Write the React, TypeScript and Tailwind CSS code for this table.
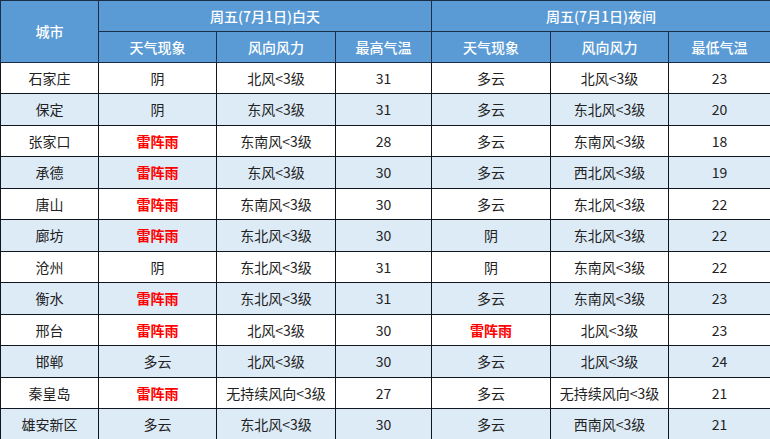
const rows: [string, string, string, string, string, string, string][] = [
  ["石家庄", "阴", "北风<3级", "31", "多云", "北风<3级", "23"],
  ["保定", "阴", "东风<3级", "31", "多云", "东北风<3级", "20"],
  ["张家口", "雷阵雨", "东南风<3级", "28", "多云", "东南风<3级", "18"],
  ["承德", "雷阵雨", "东风<3级", "30", "多云", "西北风<3级", "19"],
  ["唐山", "雷阵雨", "东南风<3级", "30", "多云", "东北风<3级", "22"],
  ["廊坊", "雷阵雨", "东北风<3级", "30", "阴", "东北风<3级", "22"],
  ["沧州", "阴", "东北风<3级", "31", "阴", "东南风<3级", "22"],
  ["衡水", "雷阵雨", "东北风<3级", "31", "多云", "东南风<3级", "23"],
  ["邢台", "雷阵雨", "北风<3级", "30", "雷阵雨", "北风<3级", "23"],
  ["邯郸", "多云", "北风<3级", "30", "多云", "北风<3级", "24"],
  ["秦皇岛", "雷阵雨", "无持续风向<3级", "27", "多云", "无持续风向<3级", "21"],
  ["雄安新区", "多云", "东北风<3级", "30", "多云", "西南风<3级", "21"],
];

const heights = ["h-[31px]", "h-[32px]", "h-[31px]", "h-[32px]", "h-[31px]", "h-[32px]", "h-[31px]", "h-[32px]", "h-[31px]", "h-[32px]", "h-[31px]", "h-[31px]"];

const Cell = ({ text }: { text: string }) => {
  const storm = text === "雷阵雨";
  return (
    <td
      className={
        "border border-[#0f1620] text-center " +
        (storm ? "font-bold text-[#ff0000]" : "text-[#222]")
      }
    >
      {text}
    </td>
  );
};

export default function App() {
  return (
    <div
      className="w-[770px] h-[439px] overflow-hidden bg-white text-[14px]"
      style={{ fontFamily: '"Noto Sans CJK SC", "Noto Sans", sans-serif' }}
    >
      <table className="w-[770px] table-fixed border-collapse">
        <colgroup>
          <col className="w-[98px]" />
          <col className="w-[118px]" />
          <col className="w-[119px]" />
          <col className="w-[96px]" />
          <col className="w-[119px]" />
          <col className="w-[118px]" />
          <col className="w-[102px]" />
        </colgroup>
        <thead className="bg-[#5b9bd5] text-white">
          <tr className="h-[31px]">
            <th rowSpan={2} className="border border-[#1a2e48] font-medium">
              城市
            </th>
            <th colSpan={3} className="border border-[#1a2e48] font-medium">
              周五(7月1日)白天
            </th>
            <th colSpan={3} className="border border-[#1a2e48] font-medium">
              周五(7月1日)夜间
            </th>
          </tr>
          <tr className="h-[31px]">
            {["天气现象", "风向风力", "最高气温", "天气现象", "风向风力", "最低气温"].map((h, i) => (
              <th key={i} className="border border-[#1a2e48] font-medium">
                {h}
              </th>
            ))}
          </tr>
        </thead>
        <tbody>
          {rows.map((r, i) => (
            <tr key={r[0]} className={heights[i] + " " + (i % 2 === 1 ? "bg-[#ddebf7]" : "bg-white")}>
              {r.map((c, j) => (
                <Cell key={j} text={c} />
              ))}
            </tr>
          ))}
        </tbody>
      </table>
    </div>
  );
}
